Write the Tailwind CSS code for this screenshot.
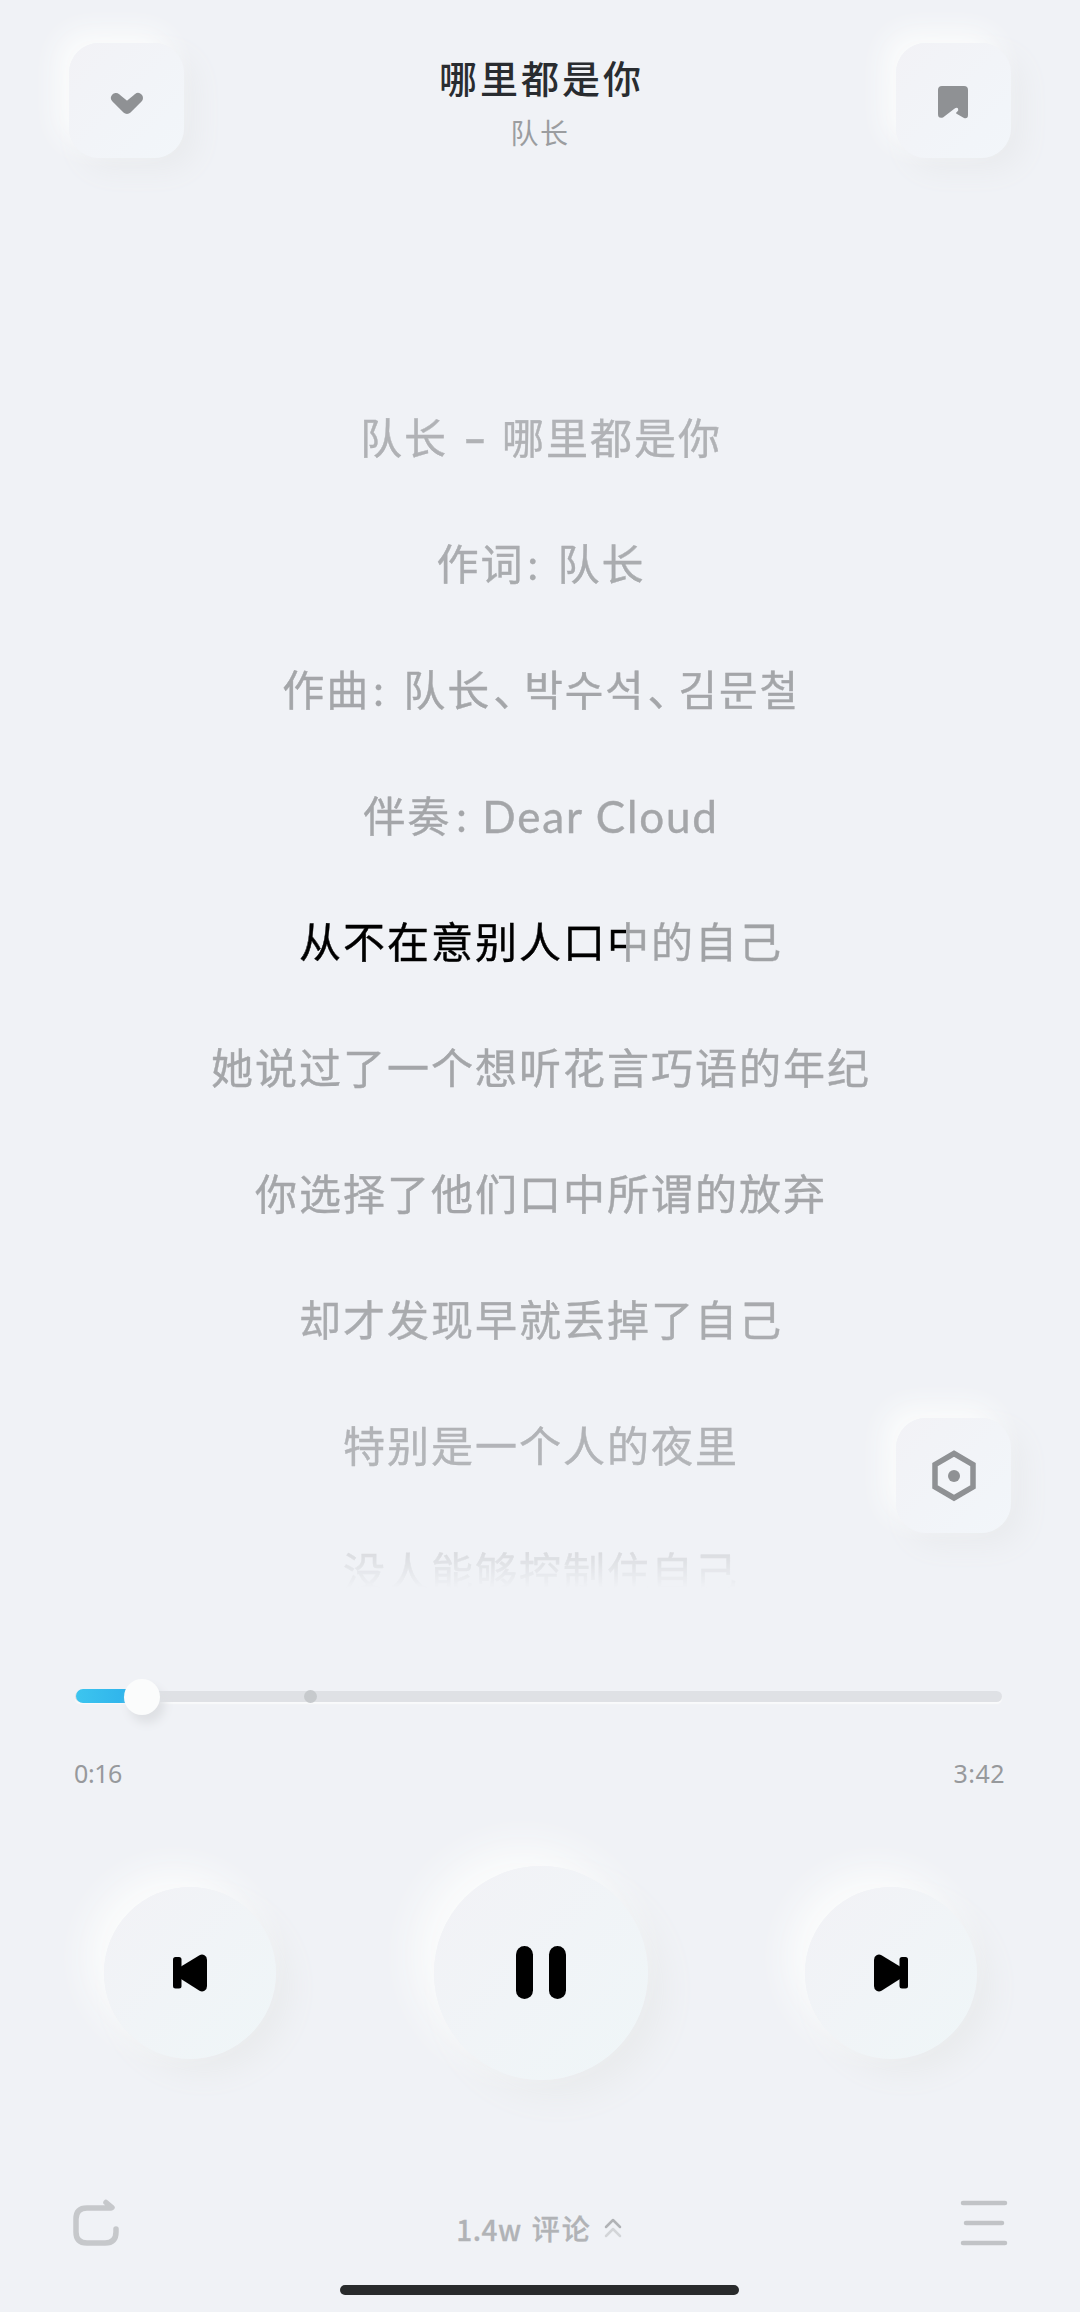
<!DOCTYPE html>
<html lang="zh-CN">
<head>
  <meta charset="UTF-8" />
  <meta name="viewport" content="width=device-width, initial-scale=1.0"/>
  <title>哪里都是你 - 队长</title>
  <script src="https://cdn.jsdelivr.net/npm/@tailwindcss/browser@4"></script>
</head>
<body class="bg-[#f0f2f6]">
  <div class="relative w-[1080px] h-[2312px] overflow-hidden flex flex-col bg-[#f0f2f6] font-['Lato','Noto_Sans_CJK_SC','Noto_Sans_CJK_KR',sans-serif]">

    <!-- header -->
    <header class="h-[375px] shrink-0 flex justify-between items-start pl-[69px] pr-[69px] pt-[43px]">
      <button class="size-[115px] rounded-[30px] flex items-center justify-center bg-linear-to-br from-[#f2f2f6] to-[#f2f6fa] shadow-[-12px_-12px_26px_#fbfcfc,12px_12px_28px_#e9ebee]">
        <svg class="w-[34px] h-[24px] mt-[6px]" viewBox="0 0 34 24"><path d="M6 6 17 17 28 6 17 15Z" fill="#8f9194" stroke="#8f9194" stroke-width="10" stroke-linejoin="round"/></svg>
      </button>
      <div class="flex flex-col items-center">
        <h1 class="mt-[8px] text-[38px] leading-[54px] font-medium tracking-[3px] mr-[-3px] text-[#292c30]">哪里都是你</h1>
        <p class="text-[28px] leading-[40px] mt-[8px] tracking-[1.5px] text-[#9b9da0]">队长</p>
      </div>
      <button class="size-[115px] rounded-[30px] flex items-center justify-center bg-linear-to-br from-[#f2f2f6] to-[#f2f6fa] shadow-[-12px_-12px_26px_#fbfcfc,12px_12px_28px_#e9ebee]">
        <svg class="w-[32px] h-[34px] mt-[2px]" viewBox="0 0 32 34"><path d="M5 1H27Q31 1 31 5V30Q31 34 27 33L20 29Q18 28 20 27Q22 25 21 23.500Q20 22 17 24L6 32.500Q1 34 1 29V5Q1 1 5 1Z" fill="#8f9194"/></svg>
      </button>
    </header>

    <!-- lyrics -->
    <section class="h-[1215px] shrink-0 overflow-hidden pl-[2px] text-[42px] tracking-[2px] text-[#a4a6a9] [-webkit-text-stroke:.4px] mask-[linear-gradient(180deg,rgba(0,0,0,.8)_0,#000_300px,#000_880px,rgba(0,0,0,.8)_1090px,rgba(0,0,0,.38)_1165px,transparent_1213px)]">
      <p class="h-[126px] flex items-center justify-center"><span>队长</span><span class="w-[54px] text-center tracking-normal font-bold">–</span><span>哪里都是你</span></p>
      <p class="h-[126px] flex items-center justify-center"><span>作词</span><span class="w-[33px] pl-[3px] tracking-normal">:</span><span>队长</span></p>
      <p class="h-[126px] flex items-center justify-center"><span>作曲</span><span class="w-[33px] pl-[3px] tracking-normal">:</span><span>队长</span><span class="w-[33px] pl-[2px] [font-feature-settings:'halt']">、</span><span class="tracking-[1.8px]">박수석</span><span class="w-[33px] pl-[2px] [font-feature-settings:'halt']">、</span><span class="tracking-[1.8px]">김문철</span></p>
      <p class="h-[126px] flex items-center justify-center"><span>伴奏</span><span class="w-[31px] pl-[5px] tracking-normal">:</span><span class="text-[44px] tracking-[1.8px]">Dear Cloud</span></p>
      <p class="h-[126px] flex items-center justify-center"><span class="text-transparent bg-clip-text bg-[linear-gradient(90deg,#000_67.600%,#a0a2a5_67.600%)]">从不在意别人口中的自己</span></p>
      <p class="h-[126px] flex items-center justify-center">她说过了一个想听花言巧语的年纪</p>
      <p class="h-[126px] flex items-center justify-center">你选择了他们口中所谓的放弃</p>
      <p class="h-[126px] flex items-center justify-center">却才发现早就丢掉了自己</p>
      <p class="h-[126px] flex items-center justify-center">特别是一个人的夜里</p>
      <p class="h-[126px] flex items-center justify-center">没人能够控制住自己</p>
    </section>

    <!-- floating settings button -->
    <button class="absolute left-[896px] top-[1418px] size-[115px] rounded-[30px] flex items-center justify-center bg-linear-to-br from-[#f2f2f6] to-[#f2f6fa] shadow-[-12px_-12px_26px_#fbfcfc,12px_12px_28px_#e9ebee]">
      <svg class="w-[44px] h-[52px]" viewBox="0 0 44 52"><path d="M22 3.500 41 14.500V37L22 48 3 37V14.500Z" fill="none" stroke="#8f9194" stroke-width="5.500"/><circle cx="22" cy="26" r="6" fill="#8f9194"/></svg>
    </button>

    <!-- progress -->
    <div class="h-[270px] shrink-0 px-[75px] pt-[88px]">
      <div class="h-[36px] flex items-center relative">
        <div class="w-[927px] h-[11px] rounded-full bg-[#dfe1e5] shadow-[0_2px_1px_#f9fafb]"></div>
        <div class="absolute left-[1px] top-[11px] w-[70px] h-[14px] rounded-full bg-linear-to-r from-[#3cc5ef] to-[#2badea]"></div>
        <div class="absolute left-[229px] top-[12px] size-[13px] rounded-full bg-[#c7cacd]"></div>
        <div class="absolute left-[49px] top-[1px] size-[36px] rounded-full bg-[#fbfcfc] shadow-[5px_8px_10px_#dee0e4]"></div>
      </div>
      <div class="flex justify-between mt-[43px] ml-[-1px] text-[25px] leading-[32px] tracking-[-.4px] text-[#97999c]">
        <span class="font-['Noto_Sans',sans-serif]">0:16</span>
        <span class="font-['Noto_Sans',sans-serif] tracking-[.5px]">3:42</span>
      </div>
    </div>

    <!-- controls -->
    <div class="h-[226px] shrink-0 flex items-center justify-between pl-[104px] pr-[103px]">
      <button class="size-[172px] rounded-full flex items-center justify-center bg-linear-to-br from-[#f2f2f6] to-[#eff6f8] shadow-[-16px_-16px_34px_#fbfcfc,14px_14px_30px_#e9ebed]">
        <svg class="w-[34px] h-[38px]" viewBox="0 0 34 38"><rect y="3" width="8.500" height="31.500" rx="2.500"/><path d="M8 12.500 26.500 1.200Q29 0 31.500 1.200 34 2.500 34 6V32Q34 35.500 31.500 36.800 29 38 26.500 36.800L8 25Z"/></svg>
      </button>
      <button class="size-[214px] rounded-full flex items-center justify-center bg-linear-to-br from-[#f2f2f6] to-[#eff6f8] shadow-[-18px_-18px_38px_#fbfcfc,16px_16px_34px_#e9ebed]">
        <svg class="w-[50px] h-[54px]" viewBox="0 0 50 54"><rect y="0" width="17" height="53" rx="8.500"/><rect x="33" y="0" width="17" height="53" rx="8.500"/></svg>
      </button>
      <button class="size-[172px] rounded-full flex items-center justify-center bg-linear-to-br from-[#f2f2f6] to-[#eff6f8] shadow-[-16px_-16px_34px_#fbfcfc,14px_14px_30px_#e9ebed]">
        <svg class="w-[34px] h-[38px]" viewBox="0 0 34 38"><path d="M26 12.500 7.500 1.200Q5 0 2.500 1.200 0 2.500 0 6V32Q0 35.500 2.500 36.800 5 38 7.500 36.800L26 25Z"/><rect x="25.500" y="3" width="8.500" height="31.500" rx="2.500"/></svg>
      </button>
    </div>

    <!-- bottom bar -->
    <footer class="mt-[109px] h-[60px] shrink-0 flex items-start justify-between px-[72px]">
      <svg class="w-[48px] h-[50px] mt-[3px]" viewBox="0 0 48 50" fill="none" stroke="#c6c8cb" stroke-width="5.500" stroke-linecap="round" stroke-linejoin="round"><path d="M39 10H15Q4 10 4 21V34Q4 45 15 45H33Q44 45 44 34V31M34 4.500 40 9.500"/></svg>
      <div class="flex items-center h-[60px] mt-[4px] mr-[2px] text-[28px] font-medium text-[#b1b3b6] [-webkit-text-stroke:.3px]">
        <span class="font-['Noto_Sans_CJK_SC',sans-serif] tracking-[.5px]">1.4w</span>
        <span class="ml-[10px] tracking-[2px]">评论</span>
        <svg class="ml-[12px] mt-[-3px] w-[18px] h-[20px]" viewBox="0 0 18 20" fill="none" stroke-width="2.500" stroke-linecap="round" stroke-linejoin="round"><path d="M2 9 9 2 16 9" stroke="#b1b3b6"/><path d="M2 18 9 11 16 18" stroke="#d3d5d8"/></svg>
      </div>
      <svg class="w-[48px] h-[48px] mt-[3px]" viewBox="0 0 48 48" fill="none" stroke="#c1c3c6" stroke-width="4.500" stroke-linecap="round"><path d="M3 5H45M6 25H42M3 45H45"/></svg>
    </footer>
    <div class="absolute left-[340px] top-[2285px] w-[399px] h-[10px] rounded-full bg-[#292b2c]"></div>
  </div>
</body>
</html>
